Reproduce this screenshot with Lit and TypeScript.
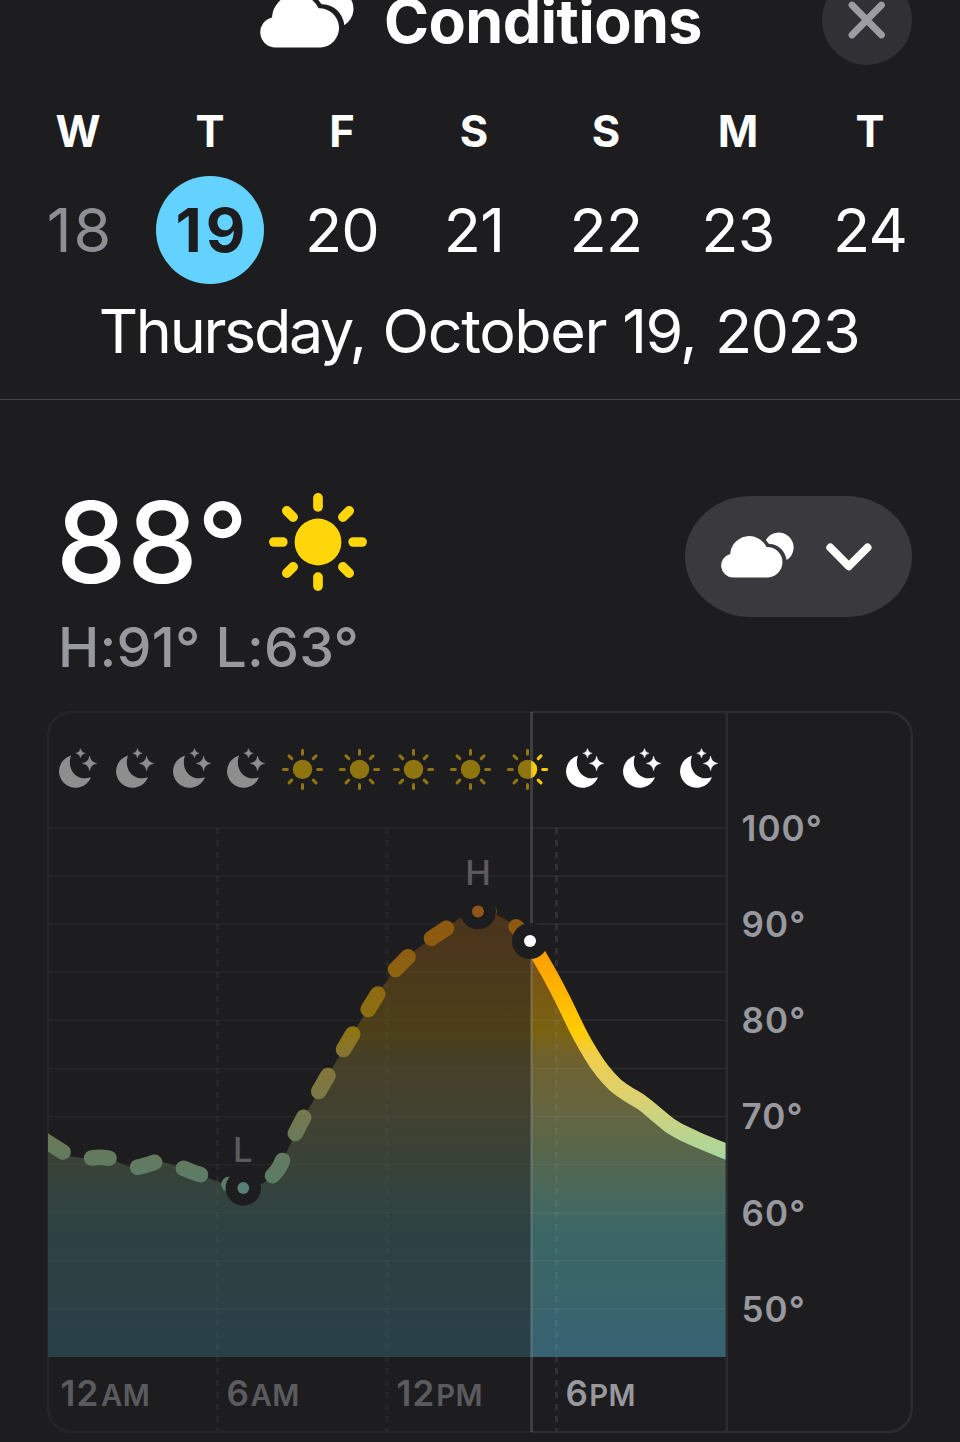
import { LitElement, html, svg, css } from "lit";
import { customElement } from "lit/decorators.js";
import { classMap } from "lit/directives/class-map.js";

type Point = [number, number];

const DAYS = [
  { letter: "W", date: 18 },
  { letter: "T", date: 19 },
  { letter: "F", date: 20 },
  { letter: "S", date: 21 },
  { letter: "S", date: 22 },
  { letter: "M", date: 23 },
  { letter: "T", date: 24 },
];

// Temperature curve, one list for the hours already past and one for the forecast.
const PAST: Point[] = [
  [47, 1141.5], [63, 1152.7], [77, 1157.3], [91.7, 1158], [109, 1158.5], [125, 1165], [137, 1167.7],
  [155, 1162], [165, 1162.7], [183, 1168], [200.7, 1175], [212, 1179.5], [228, 1185], [243, 1188],
  [260, 1184.5], [272, 1175.7], [282.7, 1160], [295, 1134], [304, 1116.7], [318.7, 1091.7], [328, 1075],
  [343, 1050], [353, 1033], [368, 1009], [378, 993], [395, 970], [408, 956], [431, 938.7],
  [446.7, 927.7], [462, 917], [478, 911], [497, 915], [516, 926.5], [530, 941],
];
const FORECAST: Point[] = [
  [530, 941], [539, 956], [551, 977], [563, 1000], [579, 1033], [592.5, 1056.7], [603, 1071.7], [615, 1084.7],
  [627, 1093.5], [641.7, 1102.5], [655.5, 1113.7], [669, 1124.8], [682, 1132.5], [696.7, 1139.3], [726, 1151.5], [738, 1156.2],
];
const DASHES: Point[][] = [
  [[42, 1138.5], [48, 1142.5], [63, 1152]],
  [[91.7, 1158], [100, 1157.2], [109, 1158.2]],
  [[137.5, 1167.3], [147, 1164.7], [154.7, 1162.3]],
  [[183.3, 1168.3], [192, 1171.7], [200.5, 1174.7]],
  [[229, 1184.5], [240, 1188]],
  [[272.5, 1175.7], [278.5, 1168.5], [282.5, 1160.5]],
  [[295.3, 1133.5], [303.7, 1117.3]],
  [[318.7, 1091.5], [328, 1075.5]],
  [[343.5, 1049.5], [352.7, 1034]],
  [[368.2, 1009.3], [377.7, 994]],
  [[395.5, 969.5], [408, 956.8]],
  [[431.5, 938.2], [446.5, 928.2]],
  [[478, 911], [489, 911.5]],
  [[516.2, 926.7], [530, 941]],
];

function smooth(points: Point[]): string {
  let d = `M${points[0][0]} ${points[0][1]}`;
  for (let i = 0; i < points.length - 1; i++) {
    const a = points[i - 1] ?? points[i];
    const b = points[i];
    const c = points[i + 1];
    const e = points[i + 2] ?? c;
    const x1 = b[0] + (c[0] - a[0]) / 6, y1 = b[1] + (c[1] - a[1]) / 6;
    const x2 = c[0] - (e[0] - b[0]) / 6, y2 = c[1] - (e[1] - b[1]) / 6;
    d += `C${x1.toFixed(2)} ${y1.toFixed(2)} ${x2.toFixed(2)} ${y2.toFixed(2)} ${c[0]} ${c[1]}`;
  }
  return d;
}

const AREA = smooth([...PAST, ...FORECAST.slice(1)]) + "V1357H47Z";
const MOONS = [59, 116, 173, 227, 566, 623, 680];
const SUNS = [302.5, 359.5, 413.5, 470.5, 527.5];
const ROWS = [828, 876, 924, 972, 1020.3, 1068.5, 1116.6, 1164.6, 1212.7, 1260.8, 1308.9];
const SCALE = [100, 90, 80, 70, 60, 50];
const HOURS = [
  { x: 60.6, n: "12", ax: 101, half: "AM" },
  { x: 226.6, n: "6", ax: 250.5, half: "AM" },
  { x: 396.6, n: "12", ax: 436.2, half: "PM" },
  { x: 565.6, n: "6", ax: 589.2, half: "PM" },
];

const cloud = svg`
  <path d="M36 136A35.500 35.500 0 0 1 27.500 66A57 57 0 0 1 136 45A45.500 45.500 0 0 1 140 136Z"/>
  <path d="M134 24A44.500 44.500 0 1 1 196 84C192 56 172 36 144.500 35.500Q142 35 141 33Z"/>`;

const sun = (cx: number, cy: number, disc: number, inner: number, outer: number, w: number) => svg`
  <circle cx=${cx} cy=${cy} r=${disc}/>
  ${[0, 45, 90, 135, 180, 225, 270, 315].map((a) => svg`
    <line x1=${cx + inner} x2=${cx + outer} y1=${cy} y2=${cy} stroke="currentColor"
      stroke-width=${w} stroke-linecap="round" transform="rotate(${a} ${cx} ${cy})"/>`)}`;

const star = (x: number, y: number, r: number) => {
  const k = r * 0.13;
  return svg`<path d="M${x} ${y - r}Q${x + k} ${y - k} ${x + r} ${y}Q${x + k} ${y + k} ${x} ${y + r}Q${x - k} ${y + k} ${x - r} ${y}Q${x - k} ${y - k} ${x} ${y - r}Z"
    stroke="#fff" stroke-width=".4" stroke-linejoin="round"/>`;
};

const moon = (x: number) => svg`
  <g transform="translate(${x} 748)" fill="#fff">
    <path d="M12 7.500C9.500 14.500 11 21.800 15.500 26.200C19.800 30.300 25.500 31.500 32 29.200A16.500 16.500 0 1 1 12 7.500Z"/>
    ${star(21.5, 5.2, 4.7)}${star(30.6, 15.4, 7.3)}
  </g>`;

@customElement("app-root")
export class AppRoot extends LitElement {
  static styles = css`
    :host { display: block; width: 960px; height: 1442px; overflow: hidden; background: #1d1d1f; color: #fff;
      font-family: Inter, "Liberation Sans", sans-serif; white-space: nowrap; }
    .top { height: 40px; padding: 0 48px; display: flex; justify-content: space-between; align-items: center; }
    .title { display: flex; align-items: center; gap: 30px; padding-left: 212px; }
    .title svg { width: 94px; height: 58.500px; margin-top: -4px; fill: #fff; flex: none; overflow: visible; }
    h1 { margin: 0; font-size: 61px; font-weight: 700; line-height: 70px; letter-spacing: -.6px; padding-top: 2px; }
    .close { width: 90px; height: 90px; border: 0; padding: 0; border-radius: 50%; background: #313135; display: grid; place-items: center; flex: none; }
    .close svg { width: 38px; height: 38px; }
    .week { display: grid; grid-template-columns: repeat(7, 132px); padding: 65px 24px 0 12px; text-align: center; }
    .day { display: flex; flex-direction: column; align-items: center; gap: 19px; }
    .letter { font-size: 43.500px; font-weight: 660; line-height: 52px; }
    .date { width: 108px; height: 108px; border-radius: 50%; font-size: 61px; line-height: 108px; letter-spacing: -.8px; }
    .past { color: #8e8e95; letter-spacing: 2px; text-indent: 4px; }
    .selected { background: #64d2ff; color: #1d1d1f; font-weight: 700; letter-spacing: 4px; text-indent: 5px; }
    .full { height: 62px; margin-top: 16px; line-height: 62px; font-size: 61px; text-align: center; padding-right: 2px; }
    .weekday { letter-spacing: -2.300px; word-spacing: 3px; }
    .month { letter-spacing: -1.400px; word-spacing: .4px; }
    .nums { letter-spacing: -1.600px; word-spacing: 3.400px; }
    .divider { height: 1px; margin-top: 37px; background: #454548; }
    .now { display: flex; justify-content: space-between; align-items: flex-start; height: 300px; box-sizing: border-box; padding: 93px 48px 0 56px; }
    .reading { display: flex; align-items: center; gap: 20px; height: 98px; }
    .temp { font-size: 112px; font-weight: 530; line-height: 98px; letter-spacing: .7px; }
    .reading svg { width: 98px; height: 98px; color: #ffd60a; fill: currentColor; }
    .range { margin-top: 27px; padding-left: 2px; line-height: 58px; font-size: 55.500px; font-weight: 500; letter-spacing: .2px; color: #98989f; }
    .picker { width: 227px; height: 121px; margin-top: 3px; border: 0; padding: 0 40px 0 36px; border-radius: 66px / 60.500px;
      background: #3a393d; display: flex; align-items: center; justify-content: space-between; }
    .picker .cloud { width: 73px; height: 45.500px; fill: #fff; margin-bottom: 4px; overflow: visible; }
    .picker .chevron { width: 46px; height: 28px; }
    .chart { display: block; width: 960px; height: 742px; font-family: inherit; }
    .tick { font-size: 35px; font-weight: 600; letter-spacing: 1.100px; fill: #98989f; }
    .half { font-size: 29.300px; letter-spacing: .4px; }
    .mark { font-size: 34.500px; font-weight: 520; fill: #98989f; text-anchor: middle; }
  `;

  private chart() {
    return html`<svg class="chart" viewBox="0 700 960 742">
      <defs>
        <linearGradient id="line" gradientUnits="userSpaceOnUse" x1="0" x2="0" y1="900" y2="1357">
          <stop offset="0" stop-color="#ff8a00"/>
          <stop offset=".12" stop-color="#ff9f00"/>
          <stop offset=".285" stop-color="#ffcc00"/>
          <stop offset=".34" stop-color="#efcd4a"/>
          <stop offset=".44" stop-color="#d9d174"/>
          <stop offset=".56" stop-color="#a9d79e"/>
          <stop offset=".72" stop-color="#7be4cd"/>
          <stop offset="1" stop-color="#5ac8fa"/>
        </linearGradient>
        <linearGradient id="area" gradientUnits="userSpaceOnUse" x1="0" x2="0" y1="911" y2="1357">
          <stop offset="0" stop-color="#79461a"/>
          <stop offset=".14" stop-color="#785514"/>
          <stop offset=".27" stop-color="#7a6210"/>
          <stop offset=".33" stop-color="#6f612e"/>
          <stop offset=".45" stop-color="#656540"/>
          <stop offset=".57" stop-color="#52674f"/>
          <stop offset=".65" stop-color="#466860"/>
          <stop offset=".72" stop-color="#3b6664"/>
          <stop offset=".87" stop-color="#39646a"/>
          <stop offset="1" stop-color="#366273"/>
        </linearGradient>
        <clipPath id="plot"><rect x="48" y="712" width="678" height="720"/></clipPath>
      </defs>
      <rect x="48" y="712" width="863.800" height="720" rx="24" fill="none" stroke="#2c2c2f" stroke-width="2.600"/>
      <g clip-path="url(#plot)">
        <path d=${AREA} fill="url(#area)"/>
        <g stroke="#98989f" stroke-opacity=".13" stroke-width="1.500">
          ${ROWS.map((y) => svg`<line x1="48" x2="726" y1=${y} y2=${y}/>`)}
        </g>
        <g stroke="#98989f" stroke-opacity=".16" stroke-width="3" stroke-dasharray="6 6">
          ${[217.5, 387, 556.5].map((x) => svg`<line x1=${x} x2=${x} y1="828" y2="1431"/>`)}
        </g>
        <g fill="none" stroke="url(#line)" stroke-width="15.600">
          ${DASHES.map((d) => svg`<path d=${smooth(d)} stroke-linecap="round" stroke-linejoin="round"/>`)}
          <path d=${smooth(FORECAST)}/>
        </g>
        <g fill="#1d1d1f">
          <circle cx="243.300" cy="1188" r="17.700"/>
          <circle cx="478" cy="911.300" r="18"/>
        </g>
        <circle cx="243.300" cy="1188" r="5.900" fill="#8ee4c6"/>
        <circle cx="478" cy="911.500" r="6" fill="#ff8c10"/>
        ${MOONS.map(moon)}
        <g fill="#ffcc00" color="#ffcc00">${SUNS.map((x) => sun(x, 769.4, 9.7, 15.2, 19.1, 3))}</g>
      </g>
      <line x1="726.800" x2="726.800" y1="712" y2="1431" stroke="#2c2c2f" stroke-width="2.400"/>
      <text class="mark" x="478" y="885">H</text>
      <text class="mark" x="242.700" y="1162">L</text>
      ${HOURS.map((h) => svg`<text class="tick" y="1406"><tspan x=${h.x}>${h.n}</tspan><tspan class="half" x=${h.ax}>${h.half}</tspan></text>`)}
      ${SCALE.map((t, i) => svg`<text class="tick" x="741.500" y=${841 + i * 96.15}>${t}°</text>`)}
      <rect x="46" y="710" width="485" height="725" fill="#1d1d1f" fill-opacity=".5"/>
      <rect x="530" y="712" width="3" height="720" fill="#98989f" fill-opacity=".27"/>
      <circle cx="530" cy="941" r="18" fill="#1d1d1f"/>
      <circle cx="530" cy="941" r="6" fill="#fff"/>
    </svg>`;
  }

  render() {
    return html`
      <header class="top">
        <div class="title">
          <svg viewBox="0 0 218 136">${cloud}</svg>
          <h1>Conditions</h1>
        </div>
        <button class="close" aria-label="Close">
          <svg viewBox="0 0 38 38" fill="none" stroke="#9c9ca3" stroke-width="6.800" stroke-linecap="round"><path d="M4 4L33.500 34M33.500 4L4 34"/></svg>
        </button>
      </header>
      <div class="week">
        ${DAYS.map((d) => html`<div class="day">
          <span class="letter">${d.letter}</span>
          <span class=${classMap({ date: true, past: d.date < 19, selected: d.date === 19 })}>${d.date}</span>
        </div>`)}
      </div>
      <div class="full"><span class="weekday">Thursday, </span><span class="month">October </span><span class="nums">19, 2023</span></div>
      <div class="divider"></div>
      <section class="now">
        <div>
          <div class="reading">
            <span class="temp">88°</span>
            <svg viewBox="0 0 98 98">${sun(49, 49, 23.4, 35.2, 44.1, 9.7)}</svg>
          </div>
          <div class="range">H:91° L:63°</div>
        </div>
        <button class="picker" aria-label="Conditions">
          <svg class="cloud" viewBox="0 0 218 136">${cloud}</svg>
          <svg class="chevron" viewBox="0 0 46 28" fill="none" stroke="#fff" stroke-width="8" stroke-linecap="round" stroke-linejoin="round"><path d="M4.300 4.500L22.800 23.300L41.500 4.500"/></svg>
        </button>
      </section>
      ${this.chart()}`;
  }
}
